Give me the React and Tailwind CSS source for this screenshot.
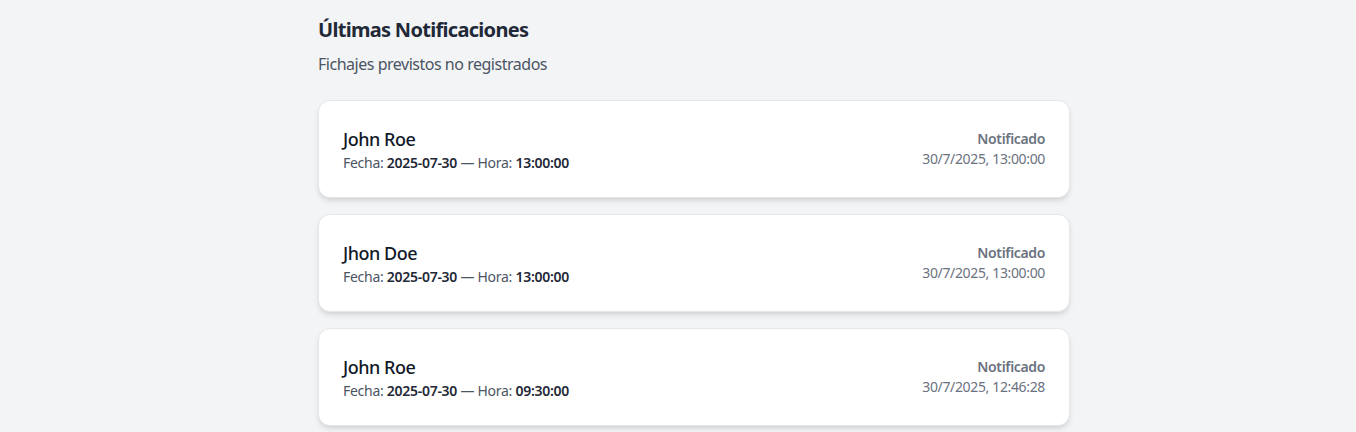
import React from "react";

const items = [
  { name: "John Roe", fecha: "2025-07-30", hora: "13:00:00", when: "30/7/2025, 13:00:00" },
  { name: "Jhon Doe", fecha: "2025-07-30", hora: "13:00:00", when: "30/7/2025, 13:00:00" },
  { name: "John Roe", fecha: "2025-07-30", hora: "09:30:00", when: "30/7/2025, 12:46:28" },
];

export default function App() {
  return (
    <div className="min-h-[432px] bg-[#f3f4f6] font-['Noto_Sans',sans-serif] tracking-[-0.03em] text-[#111827]">
      <div className="ml-[318px] w-[752px] pt-4">
        <h2 className="text-xl font-bold leading-7 tracking-[-0.035em] text-[#1f2937]">Últimas Notificaciones</h2>
        <p className="mt-2.5 text-base leading-5 text-[#4b5563]">Fichajes previstos no registrados</p>
        <div className="mt-[26px] flex flex-col gap-4">
          {items.map((it, i) => (
            <div
              key={i}
              className="flex items-center justify-between rounded-xl border border-[#e5e7eb] bg-white p-6 shadow-md"
            >
              <div>
                <div className="text-lg font-medium leading-7 text-[#111827]">{it.name}</div>
                <div className="text-sm leading-5 tracking-[-0.02em] text-[#4b5563]">
                  Fecha: <span className="font-semibold text-[#1f2937]">{it.fecha}</span> — Hora:{" "}
                  <span className="font-semibold text-[#1f2937]">{it.hora}</span>
                </div>
              </div>
              <div className="text-right text-sm leading-5 tracking-[-0.025em] text-[#6b7280]">
                <div className="font-semibold">Notificado</div>
                <div>{it.when}</div>
              </div>
            </div>
          ))}
        </div>
      </div>
    </div>
  );
}
